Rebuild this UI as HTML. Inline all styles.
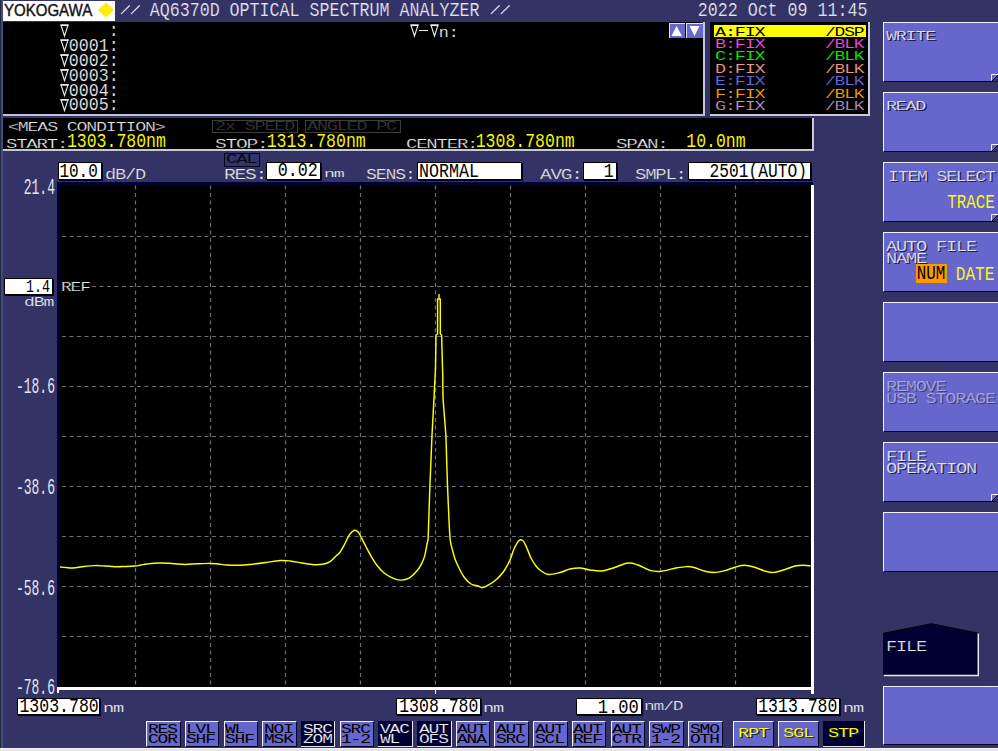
<!DOCTYPE html>
<html><head><meta charset="utf-8">
<style>
*{margin:0;padding:0;box-sizing:border-box}
html,body{width:998px;height:751px;overflow:hidden;background:#333366}
body{position:relative;font-family:"Liberation Mono",monospace;color:#fff}
.a{position:absolute}
.t{position:absolute;font-family:"Liberation Mono",monospace;white-space:pre;line-height:1;transform-origin:0 0}
.sv{position:absolute;left:0;top:0}
</style></head><body>
<div class="a" style="left:0px;top:0px;width:1px;height:751px;background:#1c2a34;"></div>
<div class="a" style="left:1px;top:0px;width:2px;height:751px;background:#464690;"></div>
<div class="a" style="left:3px;top:1px;width:112px;height:20px;background:#ffffff;"></div>
<div class="a" style="left:3px;top:22px;width:700px;height:92px;background:#000;"></div>
<div class="a" style="left:703px;top:22px;width:2px;height:94px;background:#c8c8e0;"></div>
<div class="a" style="left:3px;top:114px;width:702px;height:2px;background:#c0c0d4;"></div>
<div class="a" style="left:419px;top:30px;width:9px;height:1.3px;background:#e8e8e8;"></div>
<div class="a" style="left:669px;top:23px;width:16px;height:15px;background:#6666cc;border-left:1px solid #e0e0f0;border-top:1px solid #e0e0f0"></div>
<div class="a" style="left:686px;top:23px;width:17px;height:15px;background:#6666cc;border-left:1px solid #e0e0f0;border-top:1px solid #e0e0f0"></div>
<div class="a" style="left:710px;top:22px;width:158px;height:92px;background:#000;"></div>
<div class="a" style="left:868px;top:22px;width:2px;height:94px;background:#c8c8d8;"></div>
<div class="a" style="left:710px;top:114px;width:160px;height:2px;background:#c8c8d8;"></div>
<div class="a" style="left:714px;top:25px;width:152px;height:11.5px;background:#ffff00;"></div>
<div class="a" style="left:3px;top:118px;width:809px;height:31px;background:#000;"></div>
<div class="a" style="left:812px;top:118px;width:2px;height:33px;background:#c8c8d4;"></div>
<div class="a" style="left:3px;top:149px;width:811px;height:2px;background:#c8c8d4;"></div>
<div class="a" style="left:212px;top:119.5px;width:86px;height:13px;background:transparent;border:1px solid #3c3c3c"></div>
<div class="a" style="left:305px;top:119.5px;width:96px;height:13px;background:transparent;border:1px solid #3c3c3c"></div>
<div class="a" style="left:57.5px;top:162.3px;width:44.5px;height:17.69999999999999px;background:#fff;border:1px solid #000;box-shadow:1px 1px 0 #000022"></div>
<div class="a" style="left:224px;top:153px;width:36px;height:13.5px;background:transparent;border:1.5px solid #05051a"></div>
<div class="a" style="left:266.1px;top:162px;width:54.89999999999998px;height:18.400000000000006px;background:#fff;border:1px solid #000;box-shadow:1px 1px 0 #000022"></div>
<div class="a" style="left:417.2px;top:162.2px;width:104.80000000000001px;height:18.100000000000023px;background:#fff;border:1px solid #000;box-shadow:1px 1px 0 #000022"></div>
<div class="a" style="left:582.5px;top:162.2px;width:34.299999999999955px;height:18.100000000000023px;background:#fff;border:1px solid #000;box-shadow:1px 1px 0 #000022"></div>
<div class="a" style="left:687.8px;top:162.2px;width:123.70000000000005px;height:18.100000000000023px;background:#fff;border:1px solid #000;box-shadow:1px 1px 0 #000022"></div>
<div class="a" style="left:57px;top:182px;width:756px;height:508px;background:#000033;"></div>
<div class="a" style="left:60px;top:185px;width:751px;height:502px;background:#000;"></div>
<div class="a" style="left:811px;top:185px;width:2.6px;height:509px;background:#fff;"></div>
<div class="a" style="left:57px;top:687px;width:756px;height:2.5px;background:#fff;"></div>
<div class="a" style="left:57px;top:689px;width:2px;height:4px;background:#fff;"></div>
<div class="a" style="left:434.5px;top:689px;width:1.5px;height:4.5px;background:#fff;"></div>
<div class="a" style="left:4px;top:277.6px;width:49.1px;height:17.0px;background:#fff;border:1px solid #000;box-shadow:1px 1px 0 #000022"></div>
<div class="a" style="left:16.8px;top:697.6px;width:83.5px;height:17.799999999999955px;background:#fff;border:1px solid #000;box-shadow:1px 1px 0 #000022"></div>
<div class="a" style="left:396.4px;top:697.6px;width:84.80000000000001px;height:17.799999999999955px;background:#fff;border:1px solid #000;box-shadow:1px 1px 0 #000022"></div>
<div class="a" style="left:576px;top:697.6px;width:66.39999999999998px;height:17.799999999999955px;background:#fff;border:1px solid #000;box-shadow:1px 1px 0 #000022"></div>
<div class="a" style="left:755.7px;top:697.6px;width:84.0px;height:17.799999999999955px;background:#fff;border:1px solid #000;box-shadow:1px 1px 0 #000022"></div>
<div class="a" style="left:883px;top:22px;width:115px;height:60px;background:#6666cc;border-top:1px solid #f0f0ff;border-left:1px solid #f0f0ff;border-bottom:1px solid #000011"></div>
<div class="a" style="left:883px;top:92px;width:115px;height:60px;background:#6666cc;border-top:1px solid #f0f0ff;border-left:1px solid #f0f0ff;border-bottom:1px solid #000011"></div>
<div class="a" style="left:883px;top:162px;width:115px;height:60px;background:#6666cc;border-top:1px solid #f0f0ff;border-left:1px solid #f0f0ff;border-bottom:1px solid #000011"></div>
<div class="a" style="left:883px;top:232px;width:115px;height:60px;background:#6666cc;border-top:1px solid #f0f0ff;border-left:1px solid #f0f0ff;border-bottom:1px solid #000011"></div>
<div class="a" style="left:883px;top:302px;width:115px;height:60px;background:#6666cc;border-top:1px solid #f0f0ff;border-left:1px solid #f0f0ff;border-bottom:1px solid #000011"></div>
<div class="a" style="left:883px;top:372px;width:115px;height:60px;background:#6666cc;border-top:1px solid #f0f0ff;border-left:1px solid #f0f0ff;border-bottom:1px solid #000011"></div>
<div class="a" style="left:883px;top:442px;width:115px;height:60px;background:#6666cc;border-top:1px solid #f0f0ff;border-left:1px solid #f0f0ff;border-bottom:1px solid #000011"></div>
<div class="a" style="left:883px;top:512px;width:115px;height:60px;background:#6666cc;border-top:1px solid #f0f0ff;border-left:1px solid #f0f0ff;border-bottom:1px solid #000011"></div>
<div class="a" style="left:916px;top:264px;width:31px;height:19px;background:#ff9900;"></div>
<div class="a" style="left:883px;top:686px;width:115px;height:59px;background:#6666cc;border-top:1px solid #f0f0ff;border-left:1px solid #f0f0ff;border-bottom:1px solid #000011"></div>
<div class="a" style="left:146.1px;top:721px;width:34.5px;height:25.5px;background:#6666cc;border-top:1.5px solid #f0f0ff;border-left:1.5px solid #f0f0ff;border-right:1px solid #000022;border-bottom:1px solid #000022"></div>
<div class="a" style="left:184.81px;top:721px;width:34.5px;height:25.5px;background:#6666cc;border-top:1.5px solid #f0f0ff;border-left:1.5px solid #f0f0ff;border-right:1px solid #000022;border-bottom:1px solid #000022"></div>
<div class="a" style="left:223.51999999999998px;top:721px;width:34.5px;height:25.5px;background:#6666cc;border-top:1.5px solid #f0f0ff;border-left:1.5px solid #f0f0ff;border-right:1px solid #000022;border-bottom:1px solid #000022"></div>
<div class="a" style="left:262.23px;top:721px;width:34.5px;height:25.5px;background:#6666cc;border-top:1.5px solid #f0f0ff;border-left:1.5px solid #f0f0ff;border-right:1px solid #000022;border-bottom:1px solid #000022"></div>
<div class="a" style="left:300.94px;top:721px;width:34.5px;height:25.5px;background:#000033;border-right:1.5px solid #e8e8f4;border-bottom:1.5px solid #e8e8f4"></div>
<div class="a" style="left:339.65px;top:721px;width:34.5px;height:25.5px;background:#6666cc;border-top:1.5px solid #f0f0ff;border-left:1.5px solid #f0f0ff;border-right:1px solid #000022;border-bottom:1px solid #000022"></div>
<div class="a" style="left:378.36px;top:721px;width:34.5px;height:25.5px;background:#000033;border-right:1.5px solid #e8e8f4;border-bottom:1.5px solid #e8e8f4"></div>
<div class="a" style="left:417.07000000000005px;top:721px;width:34.5px;height:25.5px;background:#000033;border-right:1.5px solid #e8e8f4;border-bottom:1.5px solid #e8e8f4"></div>
<div class="a" style="left:455.78px;top:721px;width:34.5px;height:25.5px;background:#6666cc;border-top:1.5px solid #f0f0ff;border-left:1.5px solid #f0f0ff;border-right:1px solid #000022;border-bottom:1px solid #000022"></div>
<div class="a" style="left:494.49px;top:721px;width:34.5px;height:25.5px;background:#6666cc;border-top:1.5px solid #f0f0ff;border-left:1.5px solid #f0f0ff;border-right:1px solid #000022;border-bottom:1px solid #000022"></div>
<div class="a" style="left:533.2px;top:721px;width:34.5px;height:25.5px;background:#6666cc;border-top:1.5px solid #f0f0ff;border-left:1.5px solid #f0f0ff;border-right:1px solid #000022;border-bottom:1px solid #000022"></div>
<div class="a" style="left:571.91px;top:721px;width:34.5px;height:25.5px;background:#6666cc;border-top:1.5px solid #f0f0ff;border-left:1.5px solid #f0f0ff;border-right:1px solid #000022;border-bottom:1px solid #000022"></div>
<div class="a" style="left:610.62px;top:721px;width:34.5px;height:25.5px;background:#6666cc;border-top:1.5px solid #f0f0ff;border-left:1.5px solid #f0f0ff;border-right:1px solid #000022;border-bottom:1px solid #000022"></div>
<div class="a" style="left:649.33px;top:721px;width:34.5px;height:25.5px;background:#6666cc;border-top:1.5px solid #f0f0ff;border-left:1.5px solid #f0f0ff;border-right:1px solid #000022;border-bottom:1px solid #000022"></div>
<div class="a" style="left:688.0400000000001px;top:721px;width:34.5px;height:25.5px;background:#6666cc;border-top:1.5px solid #f0f0ff;border-left:1.5px solid #f0f0ff;border-right:1px solid #000022;border-bottom:1px solid #000022"></div>
<div class="a" style="left:733.1px;top:721px;width:40.60000000000002px;height:25.5px;background:#6666cc;border-top:1.5px solid #f0f0ff;border-left:1.5px solid #f0f0ff;border-right:1px solid #000022;border-bottom:1px solid #000022"></div>
<div class="a" style="left:778px;top:721px;width:40.60000000000002px;height:25.5px;background:#6666cc;border-top:1.5px solid #f0f0ff;border-left:1.5px solid #f0f0ff;border-right:1px solid #000022;border-bottom:1px solid #000022"></div>
<div class="a" style="left:823.4px;top:721px;width:41.60000000000002px;height:25.5px;background:#000033;border-right:1.5px solid #e8e8f4;border-bottom:1.5px solid #e8e8f4"></div>
<div class="a" style="left:0px;top:748px;width:998px;height:3px;background:#e6e6e8;"></div>
<div class="a" style="left:0px;top:748px;width:998px;height:1px;background:#f4f4f8;"></div>
<svg class="sv" width="998" height="751"><polygon points="106,2.6 114,10 106,17.6 98,10" fill="#ffee00"/><line x1="121.4" y1="13.6" x2="129.4" y2="5.8" stroke="#dcdcea" stroke-width="1.3" stroke-linecap="round"/><line x1="131.4" y1="13.6" x2="139.4" y2="5.8" stroke="#dcdcea" stroke-width="1.3" stroke-linecap="round"/><line x1="491.2" y1="13.6" x2="499.2" y2="5.8" stroke="#dcdcea" stroke-width="1.3" stroke-linecap="round"/><line x1="501.2" y1="13.6" x2="509.2" y2="5.8" stroke="#dcdcea" stroke-width="1.3" stroke-linecap="round"/><path d="M61.0,25.1 H68.0 L64.5,36.0 Z" fill="none" stroke="#e8e8e8" stroke-width="1.15"/><rect x="60.5" y="24.5" width="8" height="1.6" fill="#e8e8e8"/><path d="M61.0,40.0 H68.0 L64.5,50.9 Z" fill="none" stroke="#e8e8e8" stroke-width="1.15"/><rect x="60.5" y="39.4" width="8" height="1.6" fill="#e8e8e8"/><path d="M61.0,54.9 H68.0 L64.5,65.8 Z" fill="none" stroke="#e8e8e8" stroke-width="1.15"/><rect x="60.5" y="54.3" width="8" height="1.6" fill="#e8e8e8"/><path d="M61.0,69.8 H68.0 L64.5,80.7 Z" fill="none" stroke="#e8e8e8" stroke-width="1.15"/><rect x="60.5" y="69.2" width="8" height="1.6" fill="#e8e8e8"/><path d="M61.0,84.69999999999999 H68.0 L64.5,95.6 Z" fill="none" stroke="#e8e8e8" stroke-width="1.15"/><rect x="60.5" y="84.1" width="8" height="1.6" fill="#e8e8e8"/><path d="M61.0,99.6 H68.0 L64.5,110.5 Z" fill="none" stroke="#e8e8e8" stroke-width="1.15"/><rect x="60.5" y="99.0" width="8" height="1.6" fill="#e8e8e8"/><path d="M411.0,25.1 H418.0 L414.5,36.0 Z" fill="none" stroke="#e8e8e8" stroke-width="1.15"/><rect x="410.5" y="24.5" width="8" height="1.6" fill="#e8e8e8"/><path d="M431.0,25.1 H438.0 L434.5,36.0 Z" fill="none" stroke="#e8e8e8" stroke-width="1.15"/><rect x="430.5" y="24.5" width="8" height="1.6" fill="#e8e8e8"/><polygon points="676.5,26 682,36 671.5,36" fill="#fff"/><polygon points="689.5,26 699.5,26 694.5,36" fill="#fff"/><line x1="135.5" y1="185.6" x2="135.5" y2="687" stroke="#6e6e6e" stroke-width="1.2" stroke-dasharray="3.8 3.7"/><line x1="62" y1="236.5" x2="811" y2="236.5" stroke="#6e6e6e" stroke-width="1.2" stroke-dasharray="4 3.5"/><line x1="210.5" y1="185.6" x2="210.5" y2="687" stroke="#6e6e6e" stroke-width="1.2" stroke-dasharray="3.8 3.7"/><line x1="62" y1="286.5" x2="811" y2="286.5" stroke="#6e6e6e" stroke-width="1.2" stroke-dasharray="4 3.5"/><line x1="285.5" y1="185.6" x2="285.5" y2="687" stroke="#6e6e6e" stroke-width="1.2" stroke-dasharray="3.8 3.7"/><line x1="62" y1="336.5" x2="811" y2="336.5" stroke="#6e6e6e" stroke-width="1.2" stroke-dasharray="4 3.5"/><line x1="360.5" y1="185.6" x2="360.5" y2="687" stroke="#6e6e6e" stroke-width="1.2" stroke-dasharray="3.8 3.7"/><line x1="62" y1="386.5" x2="811" y2="386.5" stroke="#6e6e6e" stroke-width="1.2" stroke-dasharray="4 3.5"/><line x1="435.5" y1="185.6" x2="435.5" y2="687" stroke="#6e6e6e" stroke-width="1.2" stroke-dasharray="3.8 3.7"/><line x1="62" y1="436.5" x2="811" y2="436.5" stroke="#6e6e6e" stroke-width="1.2" stroke-dasharray="4 3.5"/><line x1="510.5" y1="185.6" x2="510.5" y2="687" stroke="#6e6e6e" stroke-width="1.2" stroke-dasharray="3.8 3.7"/><line x1="62" y1="486.5" x2="811" y2="486.5" stroke="#6e6e6e" stroke-width="1.2" stroke-dasharray="4 3.5"/><line x1="585.5" y1="185.6" x2="585.5" y2="687" stroke="#6e6e6e" stroke-width="1.2" stroke-dasharray="3.8 3.7"/><line x1="62" y1="536.5" x2="811" y2="536.5" stroke="#6e6e6e" stroke-width="1.2" stroke-dasharray="4 3.5"/><line x1="660.5" y1="185.6" x2="660.5" y2="687" stroke="#6e6e6e" stroke-width="1.2" stroke-dasharray="3.8 3.7"/><line x1="62" y1="586.5" x2="811" y2="586.5" stroke="#6e6e6e" stroke-width="1.2" stroke-dasharray="4 3.5"/><line x1="735.5" y1="185.6" x2="735.5" y2="687" stroke="#6e6e6e" stroke-width="1.2" stroke-dasharray="3.8 3.7"/><line x1="62" y1="636.5" x2="811" y2="636.5" stroke="#6e6e6e" stroke-width="1.2" stroke-dasharray="4 3.5"/><rect x="61" y="279" width="31" height="14" fill="#000"/><path d="M60,567 C61.00,567.08 63.83,567.33 66,567.5 C68.17,567.67 70.00,568.17 73,568 C76.00,567.83 80.33,566.90 84,566.5 C87.67,566.10 91.50,565.68 95,565.6 C98.50,565.52 101.67,565.82 105,566 C108.33,566.18 111.67,566.62 115,566.7 C118.33,566.78 121.67,566.62 125,566.5 C128.33,566.38 132.33,566.25 135,566 C137.67,565.75 139.00,565.33 141,565 C143.00,564.67 144.00,564.33 147,564 C150.00,563.67 154.83,563.08 159,563 C163.17,562.92 167.67,563.27 172,563.5 C176.33,563.73 180.83,564.35 185,564.4 C189.17,564.45 192.83,563.97 197,563.8 C201.17,563.63 206.50,563.37 210,563.4 C213.50,563.43 215.17,563.73 218,564 C220.83,564.27 223.33,564.80 227,565 C230.67,565.20 236.17,565.28 240,565.2 C243.83,565.12 245.67,564.95 250,564.5 C254.33,564.05 261.00,563.17 266,562.5 C271.00,561.83 276.00,560.75 280,560.5 C284.00,560.25 286.33,560.58 290,561 C293.67,561.42 298.00,562.38 302,563 C306.00,563.62 310.33,564.53 314,564.7 C317.67,564.87 321.33,564.50 324,564 C326.67,563.50 328.00,563.03 330,561.7 C332.00,560.37 334.33,557.58 336,556 C337.67,554.42 338.55,554.17 340,552.2 C341.45,550.23 343.15,547.08 344.7,544.2 C346.25,541.32 347.68,537.22 349.3,534.9 C350.92,532.58 352.92,530.77 354.4,530.3 C355.88,529.83 357.03,530.87 358.2,532.1 C359.37,533.33 360.08,535.22 361.4,537.7 C362.72,540.18 364.38,543.73 366.1,547 C367.82,550.27 369.83,554.18 371.7,557.3 C373.57,560.42 375.28,563.13 377.3,565.7 C379.32,568.27 381.32,570.68 383.8,572.7 C386.28,574.72 389.40,576.57 392.2,577.8 C395.00,579.03 397.80,580.03 400.6,580.1 C403.40,580.17 406.20,579.83 409,578.2 C411.80,576.57 415.23,572.85 417.4,570.3 C419.57,567.75 420.77,565.38 422,562.9 C423.23,560.42 423.95,558.67 424.8,555.4 C425.65,552.13 426.72,545.32 427.1,543.3 L428.1,539.6 L429.9,486 L432,435.3 L434,398 L435.5,368.5 L436,335 L437.6,334 L437.6,299 L439,299 L439,294.4 L439,299 L440.3,299 L440.3,334 L441.6,335 L442.7,374 L443,398 L445.9,435.3 L447.5,486 L449,520 L449.5,530 " fill="none" stroke="#ffff00" stroke-width="1.45" stroke-linejoin="round"/><path d="M449.5,530 C449.67,532.00 450.00,538.67 450.5,542 C451.00,545.33 451.75,547.17 452.5,550 C453.25,552.83 453.92,556.00 455,559 C456.08,562.00 457.50,565.00 459,568 C460.50,571.00 462.00,574.33 464,577 C466.00,579.67 468.67,582.50 471,584 C473.33,585.50 476.00,585.40 478,586 C480.00,586.60 481.00,587.93 483,587.6 C485.00,587.27 487.67,585.43 490,584 C492.33,582.57 494.67,581.17 497,579 C499.33,576.83 501.83,574.17 504,571 C506.17,567.83 508.33,563.67 510,560 C511.67,556.33 512.50,552.25 514,549 C515.50,545.75 517.55,541.92 519,540.5 C520.45,539.08 521.53,539.58 522.7,540.5 C523.87,541.42 524.62,543.08 526,546 C527.38,548.92 529.33,554.67 531,558 C532.67,561.33 534.50,564.00 536,566 C537.50,568.00 538.00,568.58 540,570 C542.00,571.42 544.67,574.08 548,574.5 C551.33,574.92 556.33,573.42 560,572.5 C563.67,571.58 566.67,569.75 570,569 C573.33,568.25 576.67,567.83 580,568 C583.33,568.17 586.33,569.50 590,570 C593.67,570.50 598.00,571.38 602,571 C606.00,570.62 609.67,569.03 614,567.7 C618.33,566.37 624.00,563.45 628,563 C632.00,562.55 634.17,563.73 638,565 C641.83,566.27 647.05,569.57 651,570.6 C654.95,571.63 657.53,571.63 661.7,571.2 C665.87,570.77 671.78,568.77 676,568 C680.22,567.23 684.00,566.68 687,566.6 C690.00,566.52 691.00,566.73 694,567.5 C697.00,568.27 701.37,570.38 705,571.2 C708.63,572.02 712.47,572.50 715.8,572.4 C719.13,572.30 721.68,571.50 725,570.6 C728.32,569.70 732.42,567.90 735.7,567 C738.98,566.10 741.70,565.20 744.7,565.2 C747.70,565.20 750.08,565.95 753.7,567 C757.32,568.05 763.08,570.60 766.4,571.5 C769.72,572.40 770.60,572.70 773.6,572.4 C776.60,572.10 780.83,570.77 784.4,569.7 C787.97,568.63 791.73,566.75 795,566 C798.27,565.25 801.40,565.20 804,565.2 C806.60,565.20 809.50,565.87 810.6,566" fill="none" stroke="#ffff00" stroke-width="1.45" stroke-linejoin="round"/><polygon points="991.5,81.5 998.5,74.5 998.5,81.5" fill="#333366"/><path d="M991.5,80.5 V74.5 H998" fill="none" stroke="#f0f0ff" stroke-width="1"/><path d="M991.5,81.5 L998.5,74.5" fill="none" stroke="#000011" stroke-width="1"/><polygon points="991.5,151.5 998.5,144.5 998.5,151.5" fill="#333366"/><path d="M991.5,150.5 V144.5 H998" fill="none" stroke="#f0f0ff" stroke-width="1"/><path d="M991.5,151.5 L998.5,144.5" fill="none" stroke="#000011" stroke-width="1"/><polygon points="991.5,221.5 998.5,214.5 998.5,221.5" fill="#333366"/><path d="M991.5,220.5 V214.5 H998" fill="none" stroke="#f0f0ff" stroke-width="1"/><path d="M991.5,221.5 L998.5,214.5" fill="none" stroke="#000011" stroke-width="1"/><polygon points="991.5,501.5 998.5,494.5 998.5,501.5" fill="#333366"/><path d="M991.5,500.5 V494.5 H998" fill="none" stroke="#f0f0ff" stroke-width="1"/><path d="M991.5,501.5 L998.5,494.5" fill="none" stroke="#000011" stroke-width="1"/><polygon points="883.7,633.2 931.4,623.7 978.3,633.2 978.3,675.5 883.7,675.5" fill="#000033" stroke="#000" stroke-width="1"/><path d="M883.7,675.5 H978.3 V633.5" fill="none" stroke="#e8e8f4" stroke-width="1.5"/></svg>
<div class="t" style="left:4.2px;top:3.2px;font-family:'Liberation Sans',sans-serif;font-size:16.6px;color:#151515;-webkit-text-stroke:0.45px #151515;transform:scale(0.905,1)">YOKOGAWA</div>
<div class="t" style="left:149.67px;top:1.23px;font-size:16.667px;color:#e4e4f0;transform:scale(1.0000,1.2176);-webkit-text-stroke:0.15px #333366">AQ6370D OPTICAL SPECTRUM ANALYZER</div>
<div class="t" style="left:697.67px;top:1.23px;font-size:16.667px;color:#e4e4f0;transform:scale(1.0000,1.2176);-webkit-text-stroke:0.15px #333366">2022 Oct 09 11:45</div>
<div class="t" style="left:108.67px;top:22.90px;font-size:16.667px;color:#e8e8e8;transform:scale(1.0000,1.1029);-webkit-text-stroke:0.15px #000">:</div>
<div class="t" style="left:68.67px;top:37.80px;font-size:16.667px;color:#e8e8e8;transform:scale(1.0000,1.1029);-webkit-text-stroke:0.15px #000">0001</div>
<div class="t" style="left:108.67px;top:37.80px;font-size:16.667px;color:#e8e8e8;transform:scale(1.0000,1.1029);-webkit-text-stroke:0.15px #000">:</div>
<div class="t" style="left:68.67px;top:52.70px;font-size:16.667px;color:#e8e8e8;transform:scale(1.0000,1.1029);-webkit-text-stroke:0.15px #000">0002</div>
<div class="t" style="left:108.67px;top:52.70px;font-size:16.667px;color:#e8e8e8;transform:scale(1.0000,1.1029);-webkit-text-stroke:0.15px #000">:</div>
<div class="t" style="left:68.67px;top:67.60px;font-size:16.667px;color:#e8e8e8;transform:scale(1.0000,1.1029);-webkit-text-stroke:0.15px #000">0003</div>
<div class="t" style="left:108.67px;top:67.60px;font-size:16.667px;color:#e8e8e8;transform:scale(1.0000,1.1029);-webkit-text-stroke:0.15px #000">:</div>
<div class="t" style="left:68.67px;top:82.50px;font-size:16.667px;color:#e8e8e8;transform:scale(1.0000,1.1029);-webkit-text-stroke:0.15px #000">0004</div>
<div class="t" style="left:108.67px;top:82.50px;font-size:16.667px;color:#e8e8e8;transform:scale(1.0000,1.1029);-webkit-text-stroke:0.15px #000">:</div>
<div class="t" style="left:68.67px;top:97.40px;font-size:16.667px;color:#e8e8e8;transform:scale(1.0000,1.1029);-webkit-text-stroke:0.15px #000">0005</div>
<div class="t" style="left:108.67px;top:97.40px;font-size:16.667px;color:#e8e8e8;transform:scale(1.0000,1.1029);-webkit-text-stroke:0.15px #000">:</div>
<div class="t" style="left:438.67px;top:26.16px;font-size:16.667px;color:#e8e8e8;transform:scale(1.0000,0.9265);-webkit-text-stroke:0.15px #000">n:</div>
<div class="t" style="left:714.52px;top:25.77px;font-size:13.176px;color:#000000;transform:scale(1.4025,1.0000);letter-spacing:-0.847px">A:FIX</div>
<div class="t" style="left:824.57px;top:25.77px;font-size:13.176px;color:#000000;transform:scale(1.3600,1.0000);letter-spacing:-0.847px">/DSP</div>
<div class="t" style="left:714.52px;top:38.12px;font-size:13.176px;color:#ff44dd;transform:scale(1.4025,1.0000);letter-spacing:-0.847px;-webkit-text-stroke:0.11px #000">B:FIX</div>
<div class="t" style="left:824.57px;top:38.12px;font-size:13.176px;color:#ff44dd;transform:scale(1.3600,1.0000);letter-spacing:-0.847px;-webkit-text-stroke:0.11px #000">/BLK</div>
<div class="t" style="left:714.52px;top:50.47px;font-size:13.176px;color:#00ee00;transform:scale(1.4025,1.0000);letter-spacing:-0.847px;-webkit-text-stroke:0.11px #000">C:FIX</div>
<div class="t" style="left:824.57px;top:50.47px;font-size:13.176px;color:#00ee00;transform:scale(1.3600,1.0000);letter-spacing:-0.847px;-webkit-text-stroke:0.11px #000">/BLK</div>
<div class="t" style="left:714.52px;top:62.82px;font-size:13.176px;color:#ee9988;transform:scale(1.4025,1.0000);letter-spacing:-0.847px;-webkit-text-stroke:0.11px #000">D:FIX</div>
<div class="t" style="left:824.57px;top:62.82px;font-size:13.176px;color:#ee9988;transform:scale(1.3600,1.0000);letter-spacing:-0.847px;-webkit-text-stroke:0.11px #000">/BLK</div>
<div class="t" style="left:714.52px;top:75.17px;font-size:13.176px;color:#6666dd;transform:scale(1.4025,1.0000);letter-spacing:-0.847px;-webkit-text-stroke:0.11px #000">E:FIX</div>
<div class="t" style="left:824.57px;top:75.17px;font-size:13.176px;color:#6666dd;transform:scale(1.3600,1.0000);letter-spacing:-0.847px;-webkit-text-stroke:0.11px #000">/BLK</div>
<div class="t" style="left:714.52px;top:87.52px;font-size:13.176px;color:#ff9900;transform:scale(1.4025,1.0000);letter-spacing:-0.847px;-webkit-text-stroke:0.11px #000">F:FIX</div>
<div class="t" style="left:824.57px;top:87.52px;font-size:13.176px;color:#ff9900;transform:scale(1.3600,1.0000);letter-spacing:-0.847px;-webkit-text-stroke:0.11px #000">/BLK</div>
<div class="t" style="left:714.52px;top:99.87px;font-size:13.176px;color:#cc99cc;transform:scale(1.4025,1.0000);letter-spacing:-0.847px;-webkit-text-stroke:0.22px #000">G:FIX</div>
<div class="t" style="left:824.57px;top:99.87px;font-size:13.176px;color:#cc99cc;transform:scale(1.3600,1.0000);letter-spacing:-0.847px;-webkit-text-stroke:0.22px #000">/BLK</div>
<div class="t" style="left:7.54px;top:120.67px;font-size:13.176px;color:#e8e8e8;transform:scale(1.3883,1.0000);letter-spacing:-0.847px;-webkit-text-stroke:0.22px #000">&lt;MEAS CONDITION&gt;</div>
<div class="t" style="left:5.68px;top:138.17px;font-size:13.176px;color:#e8e8e8;transform:scale(1.4450,1.0000);letter-spacing:-0.847px;-webkit-text-stroke:0.22px #000">START:</div>
<div class="t" style="left:66.88px;top:132.21px;font-size:16.500px;color:#ffff00;transform:scale(1.0000,1.2478);-webkit-text-stroke:0.075px #000">1303.780nm</div>
<div class="t" style="left:214.52px;top:120.37px;font-size:13.176px;color:#3c3c3c;transform:scale(1.4025,1.0000);letter-spacing:-0.847px;-webkit-text-stroke:0.22px #000">2x SPEED</div>
<div class="t" style="left:307.32px;top:120.37px;font-size:13.176px;color:#3c3c3c;transform:scale(1.4025,1.0000);letter-spacing:-0.847px;-webkit-text-stroke:0.22px #000">ANGLED PC</div>
<div class="t" style="left:215.03px;top:138.37px;font-size:13.176px;color:#e8e8e8;transform:scale(1.4875,1.0000);letter-spacing:-0.847px;-webkit-text-stroke:0.22px #000">STOP:</div>
<div class="t" style="left:266.68px;top:132.21px;font-size:16.500px;color:#ffff00;transform:scale(1.0000,1.2478);-webkit-text-stroke:0.075px #000">1313.780nm</div>
<div class="t" style="left:405.88px;top:138.37px;font-size:13.176px;color:#e8e8e8;transform:scale(1.4450,1.0000);letter-spacing:-0.847px;-webkit-text-stroke:0.22px #000">CENTER:</div>
<div class="t" style="left:475.68px;top:132.21px;font-size:16.500px;color:#ffff00;transform:scale(1.0000,1.2478);-webkit-text-stroke:0.075px #000">1308.780nm</div>
<div class="t" style="left:615.75px;top:138.37px;font-size:13.176px;color:#e8e8e8;transform:scale(1.4662,1.0000);letter-spacing:-0.847px;-webkit-text-stroke:0.22px #000">SPAN:</div>
<div class="t" style="left:686.28px;top:132.21px;font-size:16.500px;color:#ffff00;transform:scale(1.0000,1.2478);-webkit-text-stroke:0.075px #000">10.0nm</div>
<div class="t" style="left:59.42px;top:162.25px;font-size:16.000px;color:#000;transform:scale(1.0000,1.2592)">10.0</div>
<div class="t" style="left:105.01px;top:167.87px;font-size:14.000px;color:#e8e8e8;transform:scale(1.3333,1.0000);letter-spacing:-0.900px;-webkit-text-stroke:0.22px #333366">dB/D</div>
<div class="t" style="left:225.78px;top:154.25px;font-size:12.518px;color:#05051a;transform:scale(1.5211,1.0000);letter-spacing:-0.805px">CAL</div>
<div class="t" style="left:224.23px;top:167.87px;font-size:14.000px;color:#e8e8e8;transform:scale(1.4000,1.0000);letter-spacing:-0.900px;-webkit-text-stroke:0.22px #333366">RES:</div>
<div class="t" style="left:277.87px;top:162.37px;font-size:16.667px;color:#000;transform:scale(1.0000,1.1912)">0.02</div>
<div class="t" style="left:323.54px;top:169.02px;font-size:11.200px;color:#e8e8e8;transform:scale(1.6333,1.0000);letter-spacing:-0.720px;-webkit-text-stroke:0.12px #333366">nm</div>
<div class="t" style="left:365.54px;top:167.67px;font-size:14.000px;color:#e8e8e8;transform:scale(1.3000,1.0000);letter-spacing:-0.900px;-webkit-text-stroke:0.22px #333366">SENS:</div>
<div class="t" style="left:419.07px;top:162.61px;font-size:16.667px;color:#000;transform:scale(1.0000,1.1647)">NORMAL</div>
<div class="t" style="left:540.45px;top:167.67px;font-size:14.000px;color:#e8e8e8;transform:scale(1.3867,1.0000);letter-spacing:-0.900px;-webkit-text-stroke:0.22px #333366">AVG:</div>
<div class="t" style="left:603.67px;top:162.61px;font-size:16.667px;color:#000;transform:scale(1.0000,1.1647)">1</div>
<div class="t" style="left:635.48px;top:167.67px;font-size:14.000px;color:#e8e8e8;transform:scale(1.3533,1.0000);letter-spacing:-0.900px;-webkit-text-stroke:0.22px #333366">SMPL:</div>
<div class="t" style="left:709.40px;top:162.61px;font-size:16.250px;color:#000;transform:scale(1.0000,1.1946)">2501(AUTO)</div>
<div class="t" style="left:23.76px;top:178.14px;font-size:13.000px;color:#e4e4ec;transform:scale(1.0000,1.6403)">21.4</div>
<div class="t" style="left:15.96px;top:377.44px;font-size:13.000px;color:#e4e4ec;transform:scale(1.0000,1.6403)">-18.6</div>
<div class="t" style="left:15.96px;top:478.14px;font-size:13.000px;color:#e4e4ec;transform:scale(1.0000,1.6403)">-38.6</div>
<div class="t" style="left:15.96px;top:578.64px;font-size:13.000px;color:#e4e4ec;transform:scale(1.0000,1.6403)">-58.6</div>
<div class="t" style="left:15.96px;top:677.74px;font-size:13.000px;color:#e4e4ec;transform:scale(1.0000,1.6403)">-78.6</div>
<div class="t" style="left:25.93px;top:278.39px;font-size:13.333px;color:#000;transform:scale(1.0000,1.3897)">1.4</div>
<div class="t" style="left:24.05px;top:298.04px;font-size:11.859px;color:#e4e4ec;transform:scale(1.5269,1.0000);letter-spacing:-0.762px;-webkit-text-stroke:0.12px #333366">dBm</div>
<div class="t" style="left:60.57px;top:280.57px;font-size:13.176px;color:#e8e8e8;transform:scale(1.3600,1.0000);letter-spacing:-0.847px;-webkit-text-stroke:0.22px #000">REF</div>
<div class="t" style="left:19.48px;top:698.31px;font-size:16.500px;color:#000;transform:scale(1.0000,1.1765)">1303.780</div>
<div class="t" style="left:102.91px;top:702.65px;font-size:12.518px;color:#e8e8e8;transform:scale(1.4912,1.0000);letter-spacing:-0.805px;-webkit-text-stroke:0.12px #333366">nm</div>
<div class="t" style="left:399.18px;top:698.31px;font-size:16.500px;color:#000;transform:scale(1.0000,1.1765)">1308.780</div>
<div class="t" style="left:482.91px;top:702.65px;font-size:12.518px;color:#e8e8e8;transform:scale(1.4912,1.0000);letter-spacing:-0.805px;-webkit-text-stroke:0.12px #333366">nm</div>
<div class="t" style="left:597.63px;top:698.31px;font-size:17.167px;color:#000;transform:scale(1.0000,1.1308)">1.00</div>
<div class="t" style="left:643.57px;top:700.31px;font-size:13.671px;color:#e8e8e8;transform:scale(1.3108,1.0000);letter-spacing:-0.879px;-webkit-text-stroke:0.22px #333366">nm/D</div>
<div class="t" style="left:758.18px;top:698.31px;font-size:16.500px;color:#000;transform:scale(1.0000,1.1765)">1313.780</div>
<div class="t" style="left:843.31px;top:702.65px;font-size:12.518px;color:#e8e8e8;transform:scale(1.4912,1.0000);letter-spacing:-0.805px;-webkit-text-stroke:0.12px #333366">nm</div>
<div class="t" style="left:886.14px;top:29.97px;font-size:13.176px;color:#e4e4ec;transform:scale(1.3883,1.0000);letter-spacing:-0.847px;text-shadow:1px 1px 0 #202040;-webkit-text-stroke:0.22px #6666cc">WRITE</div>
<div class="t" style="left:886.14px;top:99.97px;font-size:13.176px;color:#e4e4ec;transform:scale(1.3883,1.0000);letter-spacing:-0.847px;text-shadow:1px 1px 0 #202040;-webkit-text-stroke:0.22px #6666cc">READ</div>
<div class="t" style="left:887.75px;top:169.65px;font-size:14.165px;color:#e4e4ec;transform:scale(1.2783,1.0000);letter-spacing:-0.911px;text-shadow:1px 1px 0 #202040;-webkit-text-stroke:0.22px #6666cc">ITEM SELECT</div>
<div class="t" style="left:947.23px;top:193.71px;font-size:15.833px;color:#ffff00;transform:scale(1.0000,1.3003);-webkit-text-stroke:0.075px #6666cc">TRACE</div>
<div class="t" style="left:885.81px;top:239.77px;font-size:14.000px;color:#e4e4ec;transform:scale(1.3333,1.0000);letter-spacing:-0.900px;text-shadow:1px 1px 0 #202040;-webkit-text-stroke:0.22px #6666cc">AUTO FILE</div>
<div class="t" style="left:885.81px;top:251.77px;font-size:14.000px;color:#e4e4ec;transform:scale(1.3333,1.0000);letter-spacing:-0.900px;text-shadow:1px 1px 0 #202040;-webkit-text-stroke:0.22px #6666cc">NAME</div>
<div class="t" style="left:916.73px;top:265.27px;font-size:15.833px;color:#000;transform:scale(1.0000,1.2539)">NUM</div>
<div class="t" style="left:955.71px;top:265.27px;font-size:16.167px;color:#ffff00;transform:scale(1.0000,1.2280);-webkit-text-stroke:0.075px #6666cc">DATE</div>
<div class="t" style="left:885.82px;top:379.65px;font-size:14.165px;color:#a8a8dd;transform:scale(1.3047,1.0000);letter-spacing:-0.911px;text-shadow:1px 1px 0 #404070;-webkit-text-stroke:0.22px #6666cc">REMOVE</div>
<div class="t" style="left:885.82px;top:392.25px;font-size:14.165px;color:#a8a8dd;transform:scale(1.3047,1.0000);letter-spacing:-0.911px;text-shadow:1px 1px 0 #404070;-webkit-text-stroke:0.22px #6666cc">USB STORAGE</div>
<div class="t" style="left:885.81px;top:449.77px;font-size:14.000px;color:#e4e4ec;transform:scale(1.3333,1.0000);letter-spacing:-0.900px;text-shadow:1px 1px 0 #202040;-webkit-text-stroke:0.22px #6666cc">FILE</div>
<div class="t" style="left:885.81px;top:461.77px;font-size:14.000px;color:#e4e4ec;transform:scale(1.3333,1.0000);letter-spacing:-0.900px;text-shadow:1px 1px 0 #202040;-webkit-text-stroke:0.22px #6666cc">OPERATION</div>
<div class="t" style="left:886.01px;top:639.77px;font-size:14.000px;color:#e4e4ec;transform:scale(1.3333,1.0000);letter-spacing:-0.900px;-webkit-text-stroke:0.22px #000033">FILE</div>
<div class="t" style="left:147.67px;top:724.10px;font-size:12.188px;color:#000;transform:scale(1.4703,1.0000);letter-spacing:-0.784px">RES</div>
<div class="t" style="left:147.67px;top:733.90px;font-size:12.188px;color:#000;transform:scale(1.4703,1.0000);letter-spacing:-0.784px">COR</div>
<div class="t" style="left:186.38px;top:724.10px;font-size:12.188px;color:#000;transform:scale(1.4703,1.0000);letter-spacing:-0.784px">LVL</div>
<div class="t" style="left:186.38px;top:733.90px;font-size:12.188px;color:#000;transform:scale(1.4703,1.0000);letter-spacing:-0.784px">SHF</div>
<div class="t" style="left:225.09px;top:724.10px;font-size:12.188px;color:#000;transform:scale(1.4703,1.0000);letter-spacing:-0.784px">WL</div>
<div class="t" style="left:225.09px;top:733.90px;font-size:12.188px;color:#000;transform:scale(1.4703,1.0000);letter-spacing:-0.784px">SHF</div>
<div class="t" style="left:263.80px;top:724.10px;font-size:12.188px;color:#000;transform:scale(1.4703,1.0000);letter-spacing:-0.784px">NOI</div>
<div class="t" style="left:263.80px;top:733.90px;font-size:12.188px;color:#000;transform:scale(1.4703,1.0000);letter-spacing:-0.784px">MSK</div>
<div class="t" style="left:302.51px;top:724.10px;font-size:12.188px;color:#f0f0f0;transform:scale(1.4703,1.0000);letter-spacing:-0.784px;-webkit-text-stroke:0.12px #000033">SRC</div>
<div class="t" style="left:302.51px;top:733.90px;font-size:12.188px;color:#f0f0f0;transform:scale(1.4703,1.0000);letter-spacing:-0.784px;-webkit-text-stroke:0.12px #000033">ZOM</div>
<div class="t" style="left:341.22px;top:724.10px;font-size:12.188px;color:#000;transform:scale(1.4703,1.0000);letter-spacing:-0.784px">SRC</div>
<div class="t" style="left:341.22px;top:733.90px;font-size:12.188px;color:#000;transform:scale(1.4703,1.0000);letter-spacing:-0.784px">1-2</div>
<div class="t" style="left:379.93px;top:724.10px;font-size:12.188px;color:#f0f0f0;transform:scale(1.4703,1.0000);letter-spacing:-0.784px;-webkit-text-stroke:0.12px #000033">VAC</div>
<div class="t" style="left:379.93px;top:733.90px;font-size:12.188px;color:#f0f0f0;transform:scale(1.4703,1.0000);letter-spacing:-0.784px;-webkit-text-stroke:0.12px #000033">WL</div>
<div class="t" style="left:418.64px;top:724.10px;font-size:12.188px;color:#f0f0f0;transform:scale(1.4703,1.0000);letter-spacing:-0.784px;-webkit-text-stroke:0.12px #000033">AUT</div>
<div class="t" style="left:418.64px;top:733.90px;font-size:12.188px;color:#f0f0f0;transform:scale(1.4703,1.0000);letter-spacing:-0.784px;-webkit-text-stroke:0.12px #000033">OFS</div>
<div class="t" style="left:457.35px;top:724.10px;font-size:12.188px;color:#000;transform:scale(1.4703,1.0000);letter-spacing:-0.784px">AUT</div>
<div class="t" style="left:457.35px;top:733.90px;font-size:12.188px;color:#000;transform:scale(1.4703,1.0000);letter-spacing:-0.784px">ANA</div>
<div class="t" style="left:496.06px;top:724.10px;font-size:12.188px;color:#000;transform:scale(1.4703,1.0000);letter-spacing:-0.784px">AUT</div>
<div class="t" style="left:496.06px;top:733.90px;font-size:12.188px;color:#000;transform:scale(1.4703,1.0000);letter-spacing:-0.784px">SRC</div>
<div class="t" style="left:534.77px;top:724.10px;font-size:12.188px;color:#000;transform:scale(1.4703,1.0000);letter-spacing:-0.784px">AUT</div>
<div class="t" style="left:534.77px;top:733.90px;font-size:12.188px;color:#000;transform:scale(1.4703,1.0000);letter-spacing:-0.784px">SCL</div>
<div class="t" style="left:573.48px;top:724.10px;font-size:12.188px;color:#000;transform:scale(1.4703,1.0000);letter-spacing:-0.784px">AUT</div>
<div class="t" style="left:573.48px;top:733.90px;font-size:12.188px;color:#000;transform:scale(1.4703,1.0000);letter-spacing:-0.784px">REF</div>
<div class="t" style="left:612.19px;top:724.10px;font-size:12.188px;color:#000;transform:scale(1.4703,1.0000);letter-spacing:-0.784px">AUT</div>
<div class="t" style="left:612.19px;top:733.90px;font-size:12.188px;color:#000;transform:scale(1.4703,1.0000);letter-spacing:-0.784px">CTR</div>
<div class="t" style="left:650.90px;top:724.10px;font-size:12.188px;color:#000;transform:scale(1.4703,1.0000);letter-spacing:-0.784px">SWP</div>
<div class="t" style="left:650.90px;top:733.90px;font-size:12.188px;color:#000;transform:scale(1.4703,1.0000);letter-spacing:-0.784px">1-2</div>
<div class="t" style="left:689.61px;top:724.10px;font-size:12.188px;color:#000;transform:scale(1.4703,1.0000);letter-spacing:-0.784px">SMO</div>
<div class="t" style="left:689.61px;top:733.90px;font-size:12.188px;color:#000;transform:scale(1.4703,1.0000);letter-spacing:-0.784px">OTH</div>
<div class="t" style="left:737.61px;top:727.37px;font-size:13.176px;color:#ffff00;transform:scale(1.4167,1.0000);letter-spacing:-0.847px;text-shadow:1px 1px 0 #202040;-webkit-text-stroke:0.11px #6666cc">RPT</div>
<div class="t" style="left:782.51px;top:727.37px;font-size:13.176px;color:#ffff00;transform:scale(1.4167,1.0000);letter-spacing:-0.847px;text-shadow:1px 1px 0 #202040;-webkit-text-stroke:0.11px #6666cc">SGL</div>
<div class="t" style="left:827.91px;top:727.37px;font-size:13.176px;color:#ffff00;transform:scale(1.4167,1.0000);letter-spacing:-0.847px;text-shadow:1px 1px 0 #202040;-webkit-text-stroke:0.11px #000033">STP</div>
</body></html>
